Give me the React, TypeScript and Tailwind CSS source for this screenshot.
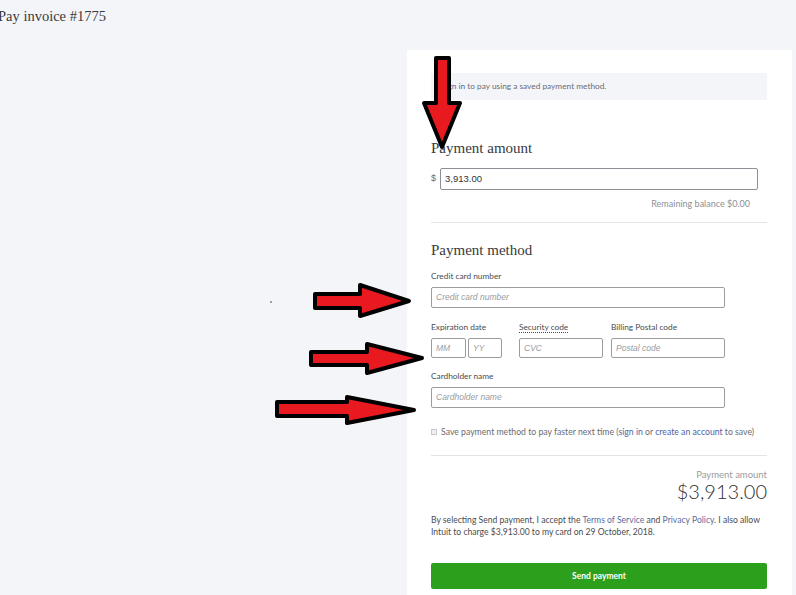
import React from "react";

const serif = "font-['Liberation_Serif',serif]";
const sans = "font-['Lato','Open_Sans',sans-serif]";
const arial = "font-['Liberation_Sans',Arial,sans-serif]";

function Field({
  placeholder,
  className,
}: {
  placeholder: string;
  className?: string;
}) {
  return (
    <div
      className={`border border-[#9a9ca1] rounded-[2px] bg-white flex items-center px-[4px] ${className ?? ""}`}
    >
      <span className={`${arial} italic text-[8.5px] text-[#9a9ca1]`}>
        {placeholder}
      </span>
    </div>
  );
}

function Label({ children, dotted }: { children: React.ReactNode; dotted?: boolean }) {
  return (
    <div className={`${sans} text-[8.3px] leading-[10px] text-[#4a4b4f]`}>
      <span className={dotted ? "border-b border-dotted border-[#4a4b4f]" : ""}>
        {children}
      </span>
    </div>
  );
}

function Arrows() {
  // red annotation arrows drawn over the screenshot
  const arrow = "fill-[#e8191f] stroke-black";
  return (
    <svg
      className="absolute left-0 top-0 pointer-events-none"
      width="796"
      height="595"
      viewBox="0 0 796 595"
    >
      <g strokeWidth="4" strokeLinejoin="round">
        <polygon
          className={arrow}
          points="436,58 449,58 449,103 460,103 442,147 424,103 436,103"
        />
        <polygon
          className={arrow}
          points="315,294 360,294 360,285 409,301 360,316 360,308 315,308"
        />
        <polygon
          className={arrow}
          points="311,352 367,352 367,344 422,358 367,373 367,365 311,365"
        />
        <polygon
          className={arrow}
          points="277,402 347,402 347,397 414,410 347,423 347,416 277,416"
        />
      </g>
      <circle cx="271" cy="302" r="0.8" fill="#333" />
    </svg>
  );
}

export default function App() {
  return (
    <div className="relative w-[796px] h-[595px] overflow-hidden bg-[#f4f5f8]">
      <div className="h-[50px] pt-[7px]">
        <div className={`${serif} -ml-[2px] text-[14.5px] leading-[18px] text-[#3a3a3a]`}>
          Pay invoice #1775
        </div>
      </div>

      <div className="ml-[407px] w-[385px] bg-white pt-[23px] pl-[24px] pr-[25px] pb-[30px]">
        <div className="h-[27px] bg-[#f4f5f8] flex items-center pl-[10px]">
          <span className={`${sans} text-[8.3px] text-[#6b6c72]`}>
            <span className="text-[#4f63a8]">Sign in</span> to pay using a saved payment method.
          </span>
        </div>

        <div className={`${serif} mt-[39px] text-[15px] leading-[18px] text-[#393a3d]`}>
          Payment amount
        </div>
        <div className="mt-[11px] flex items-center">
          <span className={`${arial} w-[9px] text-[9px] text-[#6b6c72]`}>$</span>
          <div className="w-[318px] h-[22px] border border-[#8d9096] rounded-[2px] flex items-center px-[4px]">
            <span className={`${arial} text-[9.5px] text-[#333]`}>3,913.00</span>
          </div>
        </div>
        <div className={`${sans} mt-[9px] pr-[17px] text-right text-[9px] leading-[10px] text-[#8d9096]`}>
          Remaining balance $0.00
        </div>
        <div className="mt-[13px] h-px bg-[#e3e4e7]" />

        <div className={`${serif} mt-[18px] text-[15px] leading-[18px] text-[#393a3d]`}>
          Payment method
        </div>
        <div className="mt-[12px]">
          <Label>Credit card number</Label>
        </div>
        <Field placeholder="Credit card number" className="mt-[6px] w-[294px] h-[21px]" />

        <div className="mt-[14px] flex">
          <div className="w-[88px]">
            <Label>Expiration date</Label>
            <div className="mt-[6px] flex gap-[2px]">
              <Field placeholder="MM" className="w-[35px] h-[20px]" />
              <Field placeholder="YY" className="w-[34px] h-[20px]" />
            </div>
          </div>
          <div className="w-[92px]">
            <Label dotted>Security code</Label>
            <Field placeholder="CVC" className="mt-[6px] w-[84px] h-[20px]" />
          </div>
          <div className="w-[114px]">
            <Label>Billing Postal code</Label>
            <Field placeholder="Postal code" className="mt-[6px] w-[114px] h-[20px]" />
          </div>
        </div>

        <div className="mt-[13px]">
          <Label>Cardholder name</Label>
        </div>
        <Field placeholder="Cardholder name" className="mt-[6px] w-[294px] h-[21px]" />

        <div className={`${sans} mt-[19px] flex items-center text-[8.7px] leading-[10px] text-[#6b6c72]`}>
          <span className="w-[6px] h-[6px] border border-[#c9cacd] bg-[#eeeff1] mr-[4px]" />
          <span>
            Save payment method to pay faster next time (
            <span className="text-[#4f63a8]">sign in</span> or{" "}
            <span className="text-[#4f63a8]">create an account</span> to save)
          </span>
        </div>
        <div className="mt-[18px] h-px bg-[#e3e4e7]" />

        <div className={`${sans} mt-[14px] text-right text-[9.5px] leading-[10px] text-[#9a9ca1]`}>
          Payment amount
        </div>
        <div className={`${sans} text-right font-light text-[20px] leading-[22px] text-[#2f3033]`}>
          $3,913.00
        </div>

        <p className={`${sans} mt-[12px] text-[8.6px] leading-[12px] text-[#4a4b4f]`}>
          By selecting Send payment, I accept the{" "}
          <span className="text-[#5a6ba0]">Terms of Service</span> and{" "}
          <span className="text-[#5a6ba0]">Privacy Policy</span>. I also allow
          <br />
          Intuit to charge $3,913.00 to my card on 29 October, 2018.
        </p>

        <button
          className={`${sans} mt-[25px] w-full h-[26px] rounded-[2px] bg-[#2ca01c] text-white text-[8.5px] font-bold`}
        >
          Send payment
        </button>
      </div>

      <Arrows />
    </div>
  );
}
